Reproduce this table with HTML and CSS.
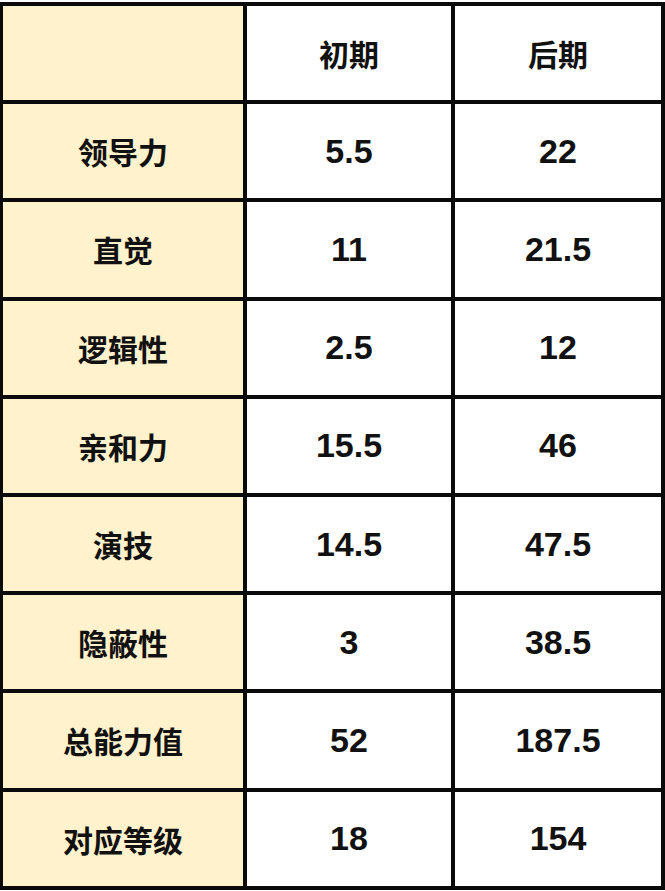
FILE: index.html
```html
<!DOCTYPE html>
<html lang="zh-CN">
<head>
<meta charset="utf-8">
<link rel="stylesheet" href="styles.css">
</head>
<body>
<div class="table">
  <div class="cell label"></div>
  <div class="cell head">初期</div>
  <div class="cell head">后期</div>

  <div class="cell label">领导力</div>
  <div class="cell num">5.5</div>
  <div class="cell num">22</div>

  <div class="cell label">直觉</div>
  <div class="cell num">11</div>
  <div class="cell num">21.5</div>

  <div class="cell label">逻辑性</div>
  <div class="cell num">2.5</div>
  <div class="cell num">12</div>

  <div class="cell label">亲和力</div>
  <div class="cell num">15.5</div>
  <div class="cell num">46</div>

  <div class="cell label">演技</div>
  <div class="cell num">14.5</div>
  <div class="cell num">47.5</div>

  <div class="cell label">隐蔽性</div>
  <div class="cell num">3</div>
  <div class="cell num">38.5</div>

  <div class="cell label">总能力值</div>
  <div class="cell num">52</div>
  <div class="cell num">187.5</div>

  <div class="cell label">对应等级</div>
  <div class="cell num">18</div>
  <div class="cell num">154</div>
</div>
</body>
</html>
```
FILE: styles.css
```css
html, body {
  margin: 0;
  padding: 0;
  background: #ffffff;
}

.table {
  margin-top: 2px;
  display: grid;
  grid-template-columns: 240px 204px 206px;
  grid-auto-rows: 94.2px;
  gap: 4px;
  padding: 4px 4px 4px 3px;
  background: #0a0a0a;
  width: 665px;
  box-sizing: border-box;
}

.cell {
  display: flex;
  align-items: center;
  justify-content: center;
  background: #ffffff;
  color: #111111;
  font-weight: bold;
}

.label {
  background: #fff2cc;
  font-family: "Noto Sans CJK SC", "Liberation Sans", sans-serif;
  font-size: 30px;
}

.head {
  font-family: "Noto Sans CJK SC", "Liberation Sans", sans-serif;
  font-size: 30px;
}

.num {
  font-family: "Liberation Sans", Arial, sans-serif;
  font-size: 34px;
}
```
